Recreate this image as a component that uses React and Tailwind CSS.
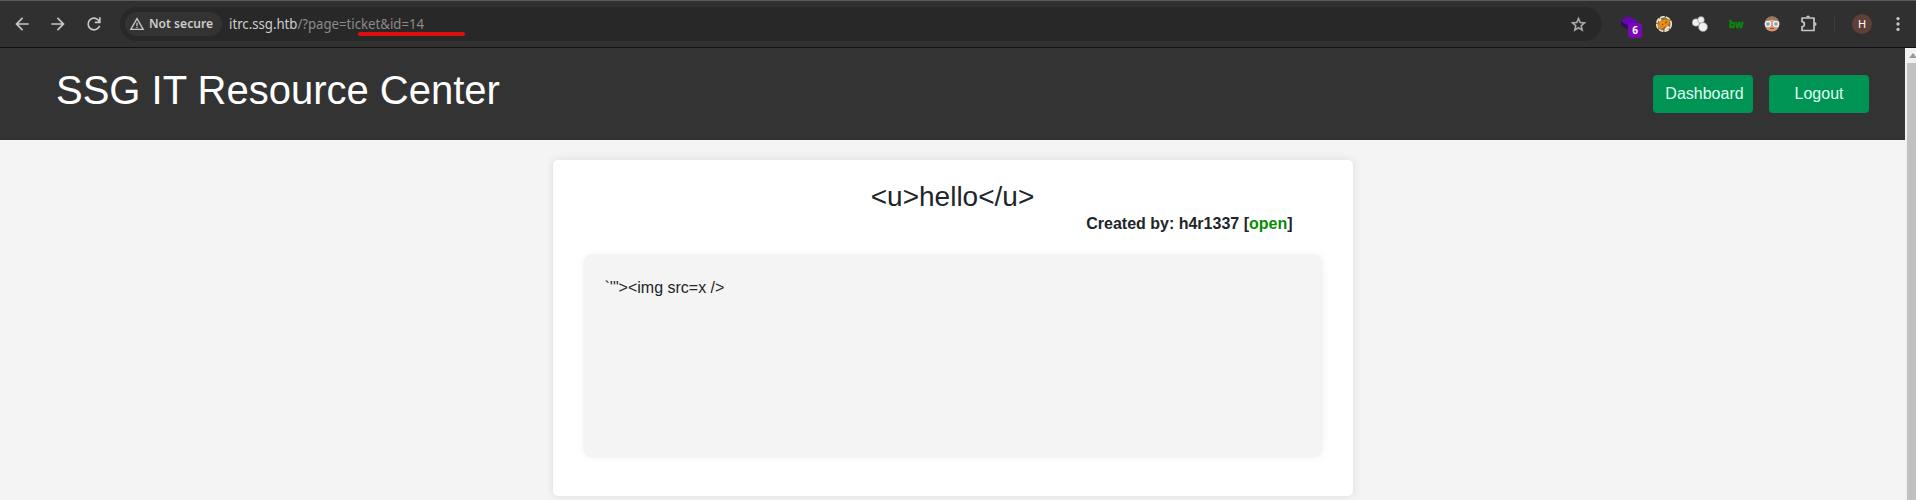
import React from "react";

const Svg = ({ children, className, box = "0 0 24 24" }) => (
  <svg viewBox={box} className={className} fill="currentColor">{children}</svg>
);

function Toolbar() {
  return (
    <div className="flex h-12 shrink-0 items-center border-b border-t border-b-[#111] border-t-[#5a5a5a] bg-[#303030] text-[#c7c7c7]">
      <Svg className="ml-[12px] size-5 shrink-0"><path d="M20 11H7.83l5.59-5.59L12 4l-8 8 8 8 1.41-1.41L7.83 13H20v-2z" /></Svg>
      <Svg className="ml-[16px] size-5 shrink-0"><path d="M12 4l-1.41 1.41L16.17 11H4v2h12.17l-5.58 5.59L12 20l8-8z" /></Svg>
      <Svg className="ml-[16px] size-5 shrink-0"><path d="M12 20q-3.35 0-5.675-2.325T4 12t2.325-5.675T12 4q1.725 0 3.3.713T18 6.75V4h2v7h-7V9h4.2q-.8-1.4-2.187-2.2T12 6Q9.500 6 7.750 7.750T6 12t1.750 4.250T12 18q1.925 0 3.475-1.1T17.650 14h2.100q-.7 2.650-2.850 4.325T12 20z" /></Svg>
      <div className="ml-[16px] flex h-[34px] w-[1482px] items-center rounded-full bg-[#282828] pl-[5px]">
        <div className="flex h-6 w-[97px] items-center rounded-full bg-[#333333] pl-1">
          <Svg className="size-4 shrink-0"><path d="M1 21 12 2l11 19H1zm3.450-2h15.100L12 6 4.450 19zM11 16h2v2h-2v-2zm0-6h2v5h-2v-5z" /></Svg>
          <svg className="ml-1 h-6 w-[66px] overflow-visible" fill="#cccccc">
            <text x="0" y="16" textLength="64" lengthAdjust="spacingAndGlyphs" className="font-['Noto_Sans',sans-serif] text-[13px] font-semibold">Not secure</text>
          </svg>
        </div>
        <div className="relative ml-[3px] h-6 w-[260px]">
          <svg className="h-6 w-[200px] overflow-visible" fill="#cfcfcf">
            <text x="4" y="17" textLength="195" lengthAdjust="spacingAndGlyphs" className="font-['Noto_Sans',sans-serif] text-[14.5px]">itrc.ssg.htb<tspan fill="#8b8b8b">/?page=ticket&amp;id=14</tspan></text>
          </svg>
          <div className="absolute left-[133px] top-[20px] h-[3.500px] w-[107px] rounded-full bg-[#dc1010]" />
        </div>
        <Svg className="ml-auto mr-[14.500px] size-[19px] text-[#a9a9a9]"><path d="m8.850 16.825 3.150-1.900 3.150 1.925-.825-3.600 2.775-2.400-3.650-.325-1.450-3.400-1.450 3.375-3.650.325 2.775 2.425-.825 3.575zM5.825 21l1.625-7.025L2 9.250l7.200-.625L12 2l2.800 6.625 7.200.625-5.450 4.725L18.175 21 12 17.275 5.825 21z" /></Svg>
      </div>
      <div className="relative ml-[17px] h-6 w-6 shrink-0">
        <svg viewBox="0 0 24 24" className="size-6"><path d="M2 9 9 4l8 4v3l-6 6-9-6z" fill="#6207b3" /><path d="m2 9 9 6v4l-9-6z" fill="#2b0d58" /></svg>
        <span className="absolute left-[9px] top-[11px] flex h-[15px] w-[14px] items-center justify-center rounded-[3px] bg-[#7b08b5] font-['Noto_Sans',sans-serif] text-[10px] font-bold text-white">6</span>
      </div>
      <svg viewBox="0 0 16 16" className="ml-[13px] size-4 shrink-0">
        <circle cx="8" cy="8" r="7.300" fill="#8a6a3a" stroke="#eee4cf" strokeWidth="1.600" strokeDasharray="5 1" />
        <path d="M2 10c0-4 3-6 6-6l1-1 2 1 3-1-1 5-2 3-3 0-2 2-4-1z" fill="#e48b1b" />
        <path d="M6 8l1 1M9 7l2-1" stroke="#6a3c08" strokeWidth="1" />
        <path d="M9 14l3-3 1 1M3 5l2-2" stroke="#fff0d6" strokeWidth="1.800" fill="none" />
      </svg>
      <svg viewBox="0 0 16 16" className="ml-[20px] size-4 shrink-0"><g fill="#f0f0f0" stroke="#8b8b8b" strokeWidth=".6"><circle cx="4" cy="6.500" r="3.800" /><circle cx="9" cy="3.900" r="3.300" /><circle cx="11" cy="11" r="4.500" /></g></svg>
      <svg viewBox="0 0 16 16" className="ml-[20px] size-4 shrink-0 overflow-visible">
        <text x="1" y="12" textLength="14.500" lengthAdjust="spacingAndGlyphs" fill="#078a07" stroke="#078a07" strokeWidth=".5" className="font-['Noto_Sans',sans-serif] text-[11px] font-bold">bw</text>
      </svg>
      <svg viewBox="0 0 16 16" className="ml-[20px] size-4 shrink-0">
        <circle cx="8" cy="8" r="7.500" fill="#d8926f" /><path d="M1 6a7.200 7.200 0 0 1 14 0z" fill="#95795c" />
        <path d="M4 5q4-3 8 0v2H4z" fill="#dca583" />
        <g fill="#6ea3b0" stroke="#eef3f3" strokeWidth="1.400"><circle cx="4" cy="8" r="2.500" /><circle cx="12" cy="8" r="2.500" /></g>
        <path d="M6 12.500h4" stroke="#a34d3d" />
      </svg>
      <svg viewBox="0 0 20 20" className="ml-[19px] size-5 shrink-0" fill="none" stroke="currentColor" strokeWidth="1.700" strokeLinejoin="round">
        <path d="M3 4h12v12.500H3v-3.700c3.200-.5 3.200-4.600 0-5.100z" />
        <path d="M7.200 3.300a1.900 1.900 0 0 1 3.800 0zM15.700 8.200a1.900 1.900 0 0 1 0 3.800z" fill="currentColor" stroke="none" />
      </svg>
      <div className="ml-[15px] h-4 w-px bg-[#3c3c3c]" />
      <div className="ml-[17px] flex size-5 shrink-0 items-center justify-center rounded-full bg-[#5f4037] font-['Noto_Sans',sans-serif] text-[11px] text-white">H</div>
      <Svg className="ml-[16px] size-5 shrink-0"><circle cx="12" cy="5.500" r="2" /><circle cx="12" cy="12" r="2" /><circle cx="12" cy="18.500" r="2" /></Svg>
    </div>
  );
}

export default function App() {
  return (
    <div className="flex h-[500px] w-[1916px] flex-col overflow-hidden bg-[#f4f4f4] font-['Liberation_Sans',Arial,sans-serif] text-[#212529]">
      <Toolbar />
      <div className="flex min-h-0 flex-1">
        <main className="w-[1905px]">
          <header className="flex h-[92px] items-start justify-between bg-[#333] pl-14 pr-9 text-white">
            <h1 className="mt-[18px] text-[40px] leading-[48px]">SSG IT Resource Center</h1>
            <nav className="mt-[27px] flex gap-4 text-base">
              <a className="flex h-[38px] w-[100px] items-center justify-center rounded bg-[#009454] pl-[3px] text-[#ddfff0]">Dashboard</a>
              <a className="flex h-[38px] w-[100px] items-center justify-center rounded bg-[#009454] text-[#ddfff0]">Logout</a>
            </nav>
          </header>
          <section className="ml-[552.5px] mt-5 h-[336px] w-[800px] rounded-[5px] bg-white px-[30px] pt-5 shadow-[0_0_10px_rgba(0,0,0,0.1)]">
            <h2 className="text-center text-[28px] leading-[33px]">&lt;u&gt;hello&lt;/u&gt;</h2>
            <p className="-mt-px mr-[30px] text-right text-base font-bold leading-6">Created by: h4r1337 [<span className="text-[#078a07]">open</span>]</p>
            <div className="mt-[18px] h-[204px] rounded-[10px] bg-[#f4f4f4] px-[22px] pt-[22px] text-base leading-6 shadow-[0_0_10px_#f4f4f4]">`'"&gt;&lt;img src=x /&gt;</div>
          </section>
        </main>
        <div className="w-[11px] bg-[#f1f1f1]">
          <svg viewBox="0 0 11 15" className="h-[15px] w-[11px]"><path d="M4 10 8 5l4 5z" fill="#999" /></svg>
          <div className="ml-[2px] h-[437px] bg-[#c1c1c1]" />
        </div>
      </div>
    </div>
  );
}
